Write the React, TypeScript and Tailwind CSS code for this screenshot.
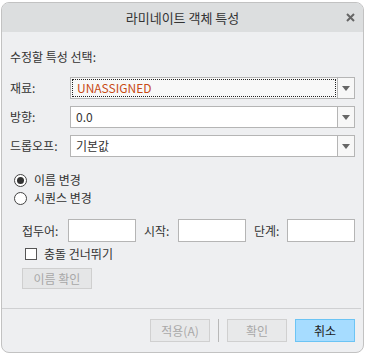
import React from "react";

const font = { fontFamily: '"Noto Sans CJK KR", "Noto Sans", sans-serif' };

function Combo({ value, focused, accent }: { value: string; focused?: boolean; accent?: boolean }) {
  return (
    <div className="flex h-[22px] w-[285px] border border-[#b5b5b5] bg-white">
      <div className={`flex flex-1 items-center ${focused ? "bg-[#f8f8f8] p-[1px]" : ""}`}>
        <div
          className={`flex h-full w-full items-center pl-[4px] ${
            focused ? "border border-dotted border-[#222]" : "pl-[5px]"
          } ${accent ? "text-[#c84b16]" : "text-[#333]"}`}
        >
          {value}
        </div>
      </div>
      <div className="flex w-[17px] items-center justify-center border-l border-[#b5b5b5] bg-[#f7f7f7]">
        <svg width="8" height="5" viewBox="0 0 8 5">
          <path d="M0 0h8L4 5z" fill="#666" />
        </svg>
      </div>
    </div>
  );
}

function Row({ label, children }: { label: string; children: React.ReactNode }) {
  return (
    <div className="flex items-center">
      <div className="w-[60px] text-[#333]">{label}</div>
      {children}
    </div>
  );
}

function Radio({ checked, label }: { checked?: boolean; label: string }) {
  return (
    <div className="flex h-[18px] items-center">
      <div className="ml-[4px] flex h-[13px] w-[13px] items-center justify-center rounded-full border border-[#444] bg-white">
        {checked && <div className="h-[7px] w-[7px] rounded-full bg-[#333]" />}
      </div>
      <span className="ml-[7px] text-[#333]">{label}</span>
    </div>
  );
}

export default function App() {
  return (
    <div className="h-[355px] w-[366px] bg-white pl-[1px] pt-[2px] text-[12px]" style={font}>
      <div className="flex h-[351px] w-[363px] flex-col overflow-hidden rounded-[8px] border border-[#c2c2c2] bg-[#eeeff1]">
        {/* header */}
        <div className="flex h-[29px] shrink-0 items-center bg-[#dcdedf]">
          <div className="w-[40px]" />
          <div className="flex-1 text-center text-[13px] text-[#333]">라미네이트 객체 특성</div>
          <div className="flex w-[40px] items-center justify-end pr-[8px]">
            <svg width="9" height="9" viewBox="0 0 9 9">
              <path d="M1 1l7 7M8 1l-7 7" stroke="#666" strokeWidth="2" />
            </svg>
          </div>
        </div>

        {/* body */}
        <div className="flex flex-1 flex-col pl-[8px]">
          <div className="mt-[17px] h-[16px] leading-[16px] text-[#333]">수정할 특성 선택:</div>
          <div className="mt-[12px] flex flex-col gap-[7px]">
            <Row label="재료:">
              <Combo value="UNASSIGNED" focused accent />
            </Row>
            <Row label="방향:">
              <Combo value="0.0" />
            </Row>
            <Row label="드롭오프:">
              <Combo value="기본값" />
            </Row>
          </div>

          <div className="mt-[14px] flex flex-col">
            <Radio checked label="이름 변경" />
            <Radio label="시퀀스 변경" />
          </div>

          <div className="mt-[12px] flex items-center pl-[12px] text-[#333]">
            <span className="w-[46px]">접두어:</span>
            <div className="h-[23px] w-[68px] border border-[#b5b5b5] bg-white" />
            <span className="ml-[8px] w-[34px]">시작:</span>
            <div className="h-[23px] w-[68px] border border-[#b5b5b5] bg-white" />
            <span className="ml-[8px] w-[33px]">단계:</span>
            <div className="h-[23px] w-[68px] border border-[#b5b5b5] bg-white" />
          </div>

          <div className="mt-[2px] flex h-[20px] items-center pl-[15px]">
            <div className="h-[12px] w-[12px] border border-[#555] bg-white" />
            <span className="ml-[7px] text-[#333]">충돌 건너뛰기</span>
          </div>

          <div className="ml-[12px] mt-[4px] flex h-[21px] w-[70px] items-center justify-center border border-[#cfcfcf] bg-[#e5e6e7] text-[#a8a8a8]">
            이름 확인
          </div>

          <div className="flex-1" />
        </div>

        {/* footer */}
        <div className="mb-[10px] flex shrink-0 flex-col">
          <div className="mr-[2px] h-px bg-[#cfd0d2]" />
          <div className="mt-[10px] flex items-center justify-end gap-[8px] pr-[8px]">
            <div className="flex h-[23px] w-[60px] items-center justify-center border border-[#d0d0d0] bg-[#e8e9ea] text-[#a8a8a8]">
              적용(A)
            </div>
            <div className="h-[23px] w-px bg-[#b8b8b8]" />
            <div className="flex h-[23px] w-[60px] items-center justify-center border border-[#d0d0d0] bg-[#e8e9ea] text-[#a8a8a8]">
              확인
            </div>
            <div className="flex h-[23px] w-[60px] items-center justify-center border border-[#6cc4f4] bg-[#a6dcff] text-[#222]">
              취소
            </div>
          </div>
        </div>
      </div>
    </div>
  );
}
